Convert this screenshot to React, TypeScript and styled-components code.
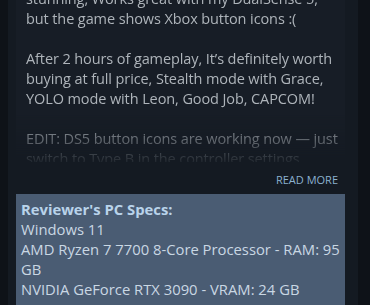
import React from "react";
import styled, { createGlobalStyle } from "styled-components";

const Global = createGlobalStyle`
  html, body { margin: 0; padding: 0; background: #0e1218; }
  body { font-family: "Open Sans", "Noto Sans", Arial, sans-serif; overflow: hidden; }
`;

const Page = styled.div`
  width: 370px;
  height: 305px;
  overflow: hidden;
  display: flex;
  padding-left: 8px;
  box-sizing: border-box;
`;

const Card = styled.div`
  width: 350px;
  background: #141a22;
  padding: 0 13px 0 8px;
  box-sizing: border-box;
  display: flex;
  flex-direction: column;
`;

const Body = styled.div`
  margin-top: -11px;
  height: 173px;
  flex-shrink: 0;
  overflow: hidden;
  padding: 0 0 0 10px;
  background: #171d26;
  color: #aeb4ba;
  font-size: 14.5px;
  letter-spacing: -0.1px;
  line-height: 20px;
  white-space: pre;
  -webkit-mask-image: linear-gradient(to bottom, #000 0, #000 125px, rgba(0,0,0,0.1) 173px);
  mask-image: linear-gradient(to bottom, #000 0, #000 125px, rgba(0,0,0,0.1) 173px);
`;

const ReadMoreRow = styled.div`
  display: flex;
  justify-content: flex-end;
  flex-shrink: 0;
  padding: 11px 7px 0 0;
  height: 21px;
`;

const ReadMore = styled.span`
  color: #8bb1cf;
  font-size: 11px;
  text-transform: uppercase;
  line-height: 14px;
`;

const Specs = styled.div`
  background: #4a5c73;
  padding: 5px 0 8px 5px;
  font-size: 14.8px;
  line-height: 20px;
  color: #c9d7e3;
  white-space: pre;
  flex: 1;
`;

const SpecTitle = styled.div`
  font-weight: 700;
  color: #b9d3ea;
`;

const SpecLine = styled.div``;

const reviewText = `stunning, Works great with my DualSense 5,
but the game shows Xbox button icons :(

After 2 hours of gameplay, It’s definitely worth
buying at full price, Stealth mode with Grace,
YOLO mode with Leon, Good Job, CAPCOM!

EDIT: DS5 button icons are working now — just
switch to Type B in the controller settings`;

export default function App() {
  return (
    <>
      <Global />
      <Page>
        <Card>
          <Body>{reviewText}</Body>
          <ReadMoreRow>
            <ReadMore>Read More</ReadMore>
          </ReadMoreRow>
          <Specs>
            <SpecTitle>Reviewer's PC Specs:</SpecTitle>
            <SpecLine>Windows 11</SpecLine>
            <SpecLine>{"AMD Ryzen 7 7700 8-Core Processor - RAM: 95\nGB"}</SpecLine>
            <SpecLine>NVIDIA GeForce RTX 3090 - VRAM: 24 GB</SpecLine>
          </Specs>
        </Card>
      </Page>
    </>
  );
}
